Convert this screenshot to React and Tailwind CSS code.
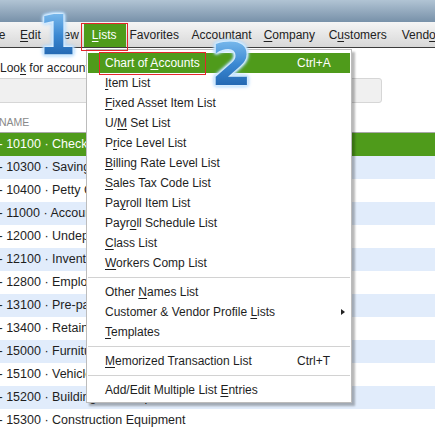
import React from "react";

const rows = [
  ["10100", "Checking"],
  ["10300", "Savings"],
  ["10400", "Petty Cash"],
  ["11000", "Accounts Receivable"],
  ["12000", "Undeposited Funds"],
  ["12100", "Inventory Asset"],
  ["12800", "Employee Advances"],
  ["13100", "Pre-paid Insurance"],
  ["13400", "Retainage Receivable"],
  ["15000", "Furniture and Equipment"],
  ["15100", "Vehicles"],
  ["15200", "Buildings and Improvements"],
  ["15300", "Construction Equipment"],
];

// label split into [before, mnemonic, after]
const menu = [
  { l: ["Chart of ", "A", "ccounts"], key: "Ctrl+A", active: true },
  { l: ["", "I", "tem List"] },
  { l: ["", "F", "ixed Asset Item List"] },
  { l: ["U/", "M", " Set List"] },
  { l: ["P", "r", "ice Level List"] },
  { l: ["", "B", "illing Rate Level List"] },
  { l: ["", "S", "ales Tax Code List"] },
  { l: ["Pa", "y", "roll Item List"] },
  { l: ["Payr", "o", "ll Schedule List"] },
  { l: ["", "C", "lass List"] },
  { l: ["", "W", "orkers Comp List"] },
  "sep",
  { l: ["Other ", "N", "ames List"] },
  { l: ["Customer & Vendor Profile ", "L", "ists"], sub: true },
  { l: ["", "T", "emplates"] },
  "sep",
  { l: ["", "M", "emorized Transaction List"], key: "Ctrl+T" },
  "sep",
  { l: ["Add/Edit Multiple List ", "E", "ntries"] },
];

const Mn = ({ parts }) => (
  <>
    {parts[0]}
    <u className="underline decoration-1 underline-offset-2">{parts[1]}</u>
    {parts[2]}
  </>
);

const glow =
  "[filter:drop-shadow(0_0_1px_#eaf6ff)_drop-shadow(0_0_1px_#dcf0ff)_drop-shadow(0_0_1px_#c4e4ff)_drop-shadow(0_0_1.5px_#9fd0ff)]";

export default function App() {
  return (
    <div className="relative w-[435px] h-[428px] overflow-hidden bg-white font-['Liberation_Sans',Arial,sans-serif] text-[12px] text-[#1e1e1e]">
      {/* title bar */}
      <div className="h-[22px] bg-linear-to-b from-[#b1c4d4] to-[#7891a9]" />

      {/* menu bar */}
      <div className="flex h-[26px] items-center whitespace-nowrap border-b border-[#3c3c3c] bg-linear-to-b from-[#f5f5f5] to-[#d8d8d8] text-[#222]">
        <span className="ml-[-14px]">File</span>
        <span className="ml-[14.7px]">
          <Mn parts={["", "E", "dit"]} />
        </span>
        <span className="ml-[12.3px]">
          <Mn parts={["", "V", "iew"]} />
        </span>
        <span className="ml-[5px] flex h-[24px] items-center self-end bg-[#4f9b1b] pl-[8px] pr-[9px] text-white">
          <Mn parts={["", "L", "ists"]} />
        </span>
        <span className="ml-[4px]">Favorites</span>
        <span className="ml-[12.7px]">Accountant</span>
        <span className="ml-[12px]">
          <Mn parts={["", "C", "ompany"]} />
        </span>
        <span className="ml-[13.7px]">
          <Mn parts={["C", "u", "stomers"]} />
        </span>
        <span className="ml-[15px]">
          <Mn parts={["Vend", "o", "rs"]} />
        </span>
      </div>

      {/* content */}
      <div className="h-[30px] pt-[13px] leading-[14px] whitespace-nowrap">
        <Mn parts={["Loo", "k", " for account name or number"]} />
      </div>
      <div className="ml-[-4px] h-[25px] w-[386px] rounded-[3px] border border-[#d6d6d6] bg-[#f0f0f0]" />
      <div className="flex h-[30px] items-end border-b border-[#a8a8a8] pb-[4px] text-[10.5px] leading-[12px] text-[#8a8a8a]">
        <span className="ml-[-1px]">NAME</span>
      </div>
      <div className="flex flex-col">
        {rows.map(([n, name], i) => (
          <div
            key={n}
            className={`flex h-[23px] items-center whitespace-nowrap text-[12.5px] ${
              i === 0
                ? "bg-[#4f9b1b] text-white"
                : i % 2 === 1
                ? "bg-[#e1ecfb]"
                : "bg-white"
            }`}
          >
            <span className="ml-[-1.5px]">
              - {n} · {name}
            </span>
          </div>
        ))}
      </div>

      {/* Lists dropdown */}
      <div className="absolute left-[86px] top-[49px] w-[266px] border border-[#bcbcbc] bg-white pt-[2.5px] pb-[2px] shadow-[3px_3px_2px_rgba(0,0,0,0.28)]">
        {menu.map((m, i) =>
          m === "sep" ? (
            <div key={i} className="flex h-[9px] items-center px-px">
              <div className="h-px w-full bg-[#d2d2d2]" />
            </div>
          ) : (
            <div
              key={i}
              className={`mx-px flex h-[20px] items-center whitespace-nowrap pl-[17px] ${
                m.active ? "bg-[#4f9b1b] text-white" : "text-[#1e1e1e]"
              }`}
            >
              <span className="w-[192px]">
                <Mn parts={m.l} />
              </span>
              {m.key && <span>{m.key}</span>}
              {m.sub && (
                <span className="ml-auto mr-[5px] h-0 w-0 border-y-[3.5px] border-l-[4px] border-y-transparent border-l-[#222]" />
              )}
            </div>
          )
        )}
      </div>

      {/* red highlight boxes */}
      <div className="absolute left-[81px] top-[23px] h-[28px] w-[47px] border-[1.5px] border-[#e3262c]" />
      <div className="absolute left-[99px] top-[52px] h-[23px] w-[107px] border-[1.5px] border-[#e3262c]" />

      {/* step numbers */}
      <div
        className={`absolute left-[38px] top-[8px] bg-linear-to-b from-[#86c4f2] via-[#3a88d2] to-[#1b5ca6] bg-clip-text font-['DejaVu_Sans',sans-serif] text-[55px] font-bold leading-none text-transparent ${glow}`}
      >
        1
      </div>
      <div
        className={`absolute left-[211px] top-[35px] bg-linear-to-b from-[#86c4f2] via-[#3a88d2] to-[#1b5ca6] bg-clip-text font-['DejaVu_Sans',sans-serif] text-[59px] font-bold leading-none text-transparent ${glow}`}
      >
        2
      </div>
    </div>
  );
}
